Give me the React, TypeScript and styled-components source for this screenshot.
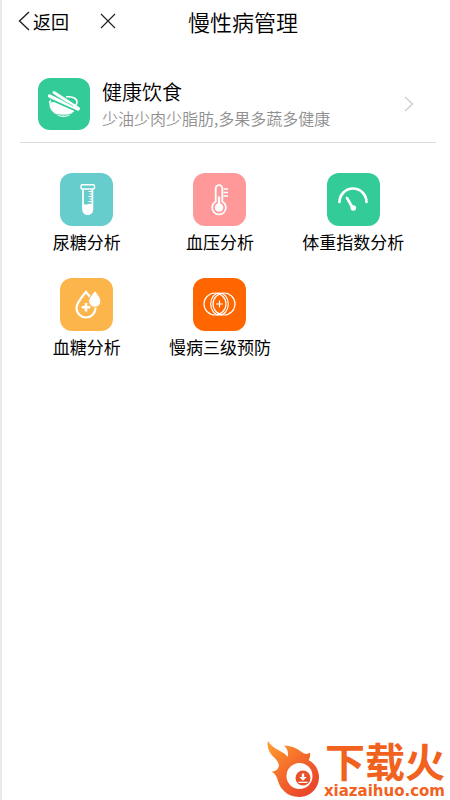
import React from "react";
import styled, { createGlobalStyle } from "styled-components";

const GlobalStyle = createGlobalStyle`
  * { box-sizing: border-box; }
  body {
    margin: 0;
    background: #fff;
    color: #000;
    font-family: "Noto Sans CJK SC", sans-serif;
  }
  button { border: 0; padding: 0; background: none; color: inherit; font: inherit; cursor: pointer; }
  a { color: inherit; text-decoration: none; }
  svg { display: block; flex: none; }
`;

const Page = styled.div`
  display: flex;
  flex-direction: column;
  min-height: 100vh;
  border-left: 2px solid #e9e9e9;
`;

const Header = styled.header`
  display: grid;
  grid-template-columns: 1fr auto 1fr;
  align-items: center;
  height: 42px;
  padding: 0 16px;
`;

const HeaderActions = styled.div`
  display: flex;
  align-items: center;
  gap: 31px;
`;

const BackButton = styled.button`
  display: flex;
  align-items: center;
  gap: 3px;
  font-size: 18px;
  line-height: 24px;
`;

const Title = styled.h1`
  margin: 0;
  padding-left: 34px;
  font-size: 22px;
  font-weight: 350;
  line-height: 32px;
`;

const FeatureLink = styled.a`
  display: flex;
  align-items: center;
  gap: 12px;
  margin: 24px 14px 0 18px;
  padding: 12px 22px 12px 18px;
  border-bottom: 1px solid #dcdcdc;
`;

const Tile = styled.span<{ $color: string; $size: number }>`
  display: flex;
  flex: none;
  align-items: center;
  justify-content: center;
  width: ${(p) => p.$size}px;
  height: ${(p) => p.$size}px;
  border-radius: 12px;
  background: ${(p) => p.$color};
`;

const FeatureText = styled.span`
  display: flex;
  flex: 1;
  flex-direction: column;
  white-space: nowrap;
`;

const FeatureName = styled.span`
  font-size: 20px;
  font-weight: 350;
  line-height: 28px;
`;

const FeatureNote = styled.span`
  font-size: 16px;
  font-weight: 350;
  line-height: 24px;
  color: #909090;
`;

const Grid = styled.nav`
  display: grid;
  grid-template-columns: repeat(3, 1fr);
  row-gap: 24px;
  padding: 30px 30px 0 18px;
`;

const GridLink = styled.a`
  display: flex;
  flex-direction: column;
  align-items: center;
  gap: 4px;
  font-size: 17px;
  line-height: 24px;
  white-space: nowrap;
`;

const Brand = styled.a`
  display: flex;
  align-items: flex-end;
  align-self: flex-end;
  gap: 4px;
  margin-top: auto;
  padding-right: 5px;
  color: #f2621f;
`;

const BrandText = styled.span`
  display: flex;
  flex-direction: column;
  align-items: flex-end;
`;

const BrandName = styled.span`
  font-size: 40px;
  font-weight: 700;
  line-height: 44px;
`;

const BrandSite = styled.span`
  font-family: "DejaVu Sans", sans-serif;
  font-size: 15px;
  font-weight: 700;
  line-height: 18px;
`;

const BowlIcon = () => (
  <svg width="36" height="36" viewBox="0 0 36 36" fill="none" aria-hidden="true">
    <path d="M3.500 17C3 22 6 26.500 11 28.500h12c4-1.500 6.500-4 7.500-7.500L15 14Z" fill="#fff" />
    <path d="M3.500 17c.5-2.500 2.500-4 6-5M20 10.800c6-.5 11 1.500 11 5.200 0 1.500-.5 2.500-1.500 3.500" stroke="#fff" strokeWidth="1.600" />
    <path d="M10.500 28.500c2 3.200 12 3.200 14 0Z" fill="#fff" />
    <path d="M11 28.300c3 1.500 10 1.500 13 0" stroke="#33cc99" strokeWidth=".8" />
    <path d="m5 13.500 25 11" stroke="#33cc99" strokeWidth="2" />
    <path d="m3.500 10 28.500 13" stroke="#fff" strokeWidth="3.400" strokeLinecap="round" />
    <path d="M8 6.500 32.500 22.500" stroke="#fff" strokeWidth="3" strokeLinecap="round" />
    <path d="m5 8 22 12" stroke="#33cc99" strokeWidth=".7" />
  </svg>
);

const TubeIcon = () => (
  <svg width="36" height="36" viewBox="0 0 36 36" fill="none" aria-hidden="true">
    <rect x="12" y="2.700" width="13.500" height="4.300" rx="1.200" stroke="#fff" strokeWidth="1.400" />
    <path d="M14 7v20.500a4.700 4.700 0 0 0 9.400 0V7" stroke="#fff" strokeWidth="1.700" />
    <path d="M14 22c3 1.600 6-1 9.400 0v5.500a4.700 4.700 0 0 1-9.400 0Z" fill="#fff" />
    <path d="M19.500 9.500H23M20.500 12H23M19.500 14.500H23M20.500 17H23M19.500 19.500H23" stroke="#fff" strokeWidth="1" />
  </svg>
);

const ThermometerIcon = () => (
  <svg width="36" height="36" viewBox="0 0 36 36" fill="none" aria-hidden="true">
    <path d="M13.700 19.500V6.500a3.300 3.300 0 0 1 6.600 0v13a6.900 6.900 0 1 1-6.600 0Z" stroke="#fff" strokeWidth="1.800" />
    <circle cx="17" cy="25.500" r="4.300" fill="#fff" />
    <path d="M17 14.500V26" stroke="#fff" strokeWidth="2.200" />
    <path d="M21.500 7h4.500M21.500 10.500h4.500M21.500 14h4.500" stroke="#fff" strokeWidth="1.400" />
  </svg>
);

const GaugeIcon = () => (
  <svg width="36" height="36" viewBox="0 0 36 36" fill="none" aria-hidden="true">
    <path d="M4.500 20a13.500 13.500 0 0 1 27 0" stroke="#fff" strokeWidth="2.600" strokeLinecap="round" />
    <path d="m12 16 5.500 9.500" stroke="#fff" strokeWidth="2.600" strokeLinecap="round" />
    <circle cx="18.300" cy="26" r="2.800" fill="#fff" />
  </svg>
);

const DropIcon = () => (
  <svg width="36" height="36" viewBox="0 0 36 36" fill="none" aria-hidden="true">
    <path d="M17 4.800C13 10 7.500 15.500 7.500 21a9.500 9.500 0 0 0 19 0C26.500 15.500 21 10 17 4.800Z" stroke="#fff" strokeWidth="2.200" />
    <path d="M17 16v8.500M12.800 20.300h8.500" stroke="#fff" strokeWidth="2.600" />
    <path d="M26 3.500c-2.800 4-6.300 7-6.300 10.700a6.100 6.100 0 0 0 12.200 0C31.900 10.500 28.800 7.500 26 3.500Z" fill="#fff" stroke="#fbb54a" strokeWidth="1" />
  </svg>
);

const RingsIcon = () => (
  <svg width="36" height="36" viewBox="0 0 36 36" fill="none" stroke="#fff" strokeWidth="1.200" aria-hidden="true">
    <circle cx="13" cy="17" r="11" />
    <circle cx="22" cy="17" r="11" />
    <ellipse cx="17.500" cy="17" rx="8.800" ry="11" />
    <path d="M17.500 13.500v7M14 17h7" />
  </svg>
);

const FlameLogo = () => (
  <svg width="53" height="60" viewBox="0 0 53 60" aria-hidden="true">
    <defs>
      <linearGradient id="flame" x1="0" y1="0" x2="0.800" y2="1">
        <stop offset="0" stopColor="#ffa02d" />
        <stop offset="0.500" stopColor="#f46b2b" />
        <stop offset="1" stopColor="#e8432a" />
      </linearGradient>
    </defs>
    <path
      d="M1 1C4 6 8 8 12 10.500 16 12.500 19 14 20.500 17 21.500 13 21 9 17 5.500 25 6 30 8.500 34 11.500 37 14 40 15 43 12.500 43.500 16 43 18 41.500 20 48 23.500 52 30 52 37 52 48.500 43 57 32 57 20 57 13 48.500 11 41 10 36.500 8 33.500 4.500 31.500 9 31.500 13 28 11.500 23.500 10 19 5 16.500 3 12.500 1 8.500 0 5 1 1Z"
      fill="url(#flame)"
    />
    <circle cx="32.500" cy="36" r="13" fill="#fff" />
    <circle cx="36" cy="38" r="7.500" fill="#e8502a" />
    <path d="M34.800 33.500h2.400v3.500h2.500L36 40.700 32.300 37h2.500ZM31.500 41.700h9v1.300h-9Z" fill="#fff" />
  </svg>
);

const ITEMS = [
  { name: "尿糖分析", color: "#66cccc", Icon: TubeIcon },
  { name: "血压分析", color: "#ff9999", Icon: ThermometerIcon },
  { name: "体重指数分析", color: "#33cc99", Icon: GaugeIcon },
  { name: "血糖分析", color: "#fbb54a", Icon: DropIcon },
  { name: "慢病三级预防", color: "#ff6600", Icon: RingsIcon },
];

export default function App() {
  return (
    <>
      <GlobalStyle />
      <Page>
        <Header>
          <HeaderActions>
            <BackButton type="button">
              <svg width="12" height="20" viewBox="0 0 12 20" fill="none" stroke="#222" strokeWidth="1.400" aria-hidden="true">
                <path d="m11 1-9.500 9L11 19" />
              </svg>
              返回
            </BackButton>
            <button type="button" aria-label="关闭">
              <svg width="16" height="16" viewBox="0 0 16 16" fill="none" stroke="#222" strokeWidth="1.200" aria-hidden="true">
                <path d="m1 1 14 14M15 1 1 15" />
              </svg>
            </button>
          </HeaderActions>
          <Title>慢性病管理</Title>
        </Header>
        <main>
          <FeatureLink href="#diet">
            <Tile $color="#33cc99" $size={52}>
              <BowlIcon />
            </Tile>
            <FeatureText>
              <FeatureName>健康饮食</FeatureName>
              <FeatureNote>少油少肉少脂肪,多果多蔬多健康</FeatureNote>
            </FeatureText>
            <svg width="10" height="16" viewBox="0 0 10 16" fill="none" stroke="#ccc" strokeWidth="1.300" aria-hidden="true">
              <path d="m1 1 7.500 7L1 15" />
            </svg>
          </FeatureLink>
          <Grid>
            {ITEMS.map(({ name, color, Icon }) => (
              <GridLink key={name} href={`#${name}`}>
                <Tile $color={color} $size={53}>
                  <Icon />
                </Tile>
                {name}
              </GridLink>
            ))}
          </Grid>
        </main>
        <Brand href="#home">
          <FlameLogo />
          <BrandText>
            <BrandName>下载火</BrandName>
            <BrandSite>xiazaihuo.com</BrandSite>
          </BrandText>
        </Brand>
      </Page>
    </>
  );
}
